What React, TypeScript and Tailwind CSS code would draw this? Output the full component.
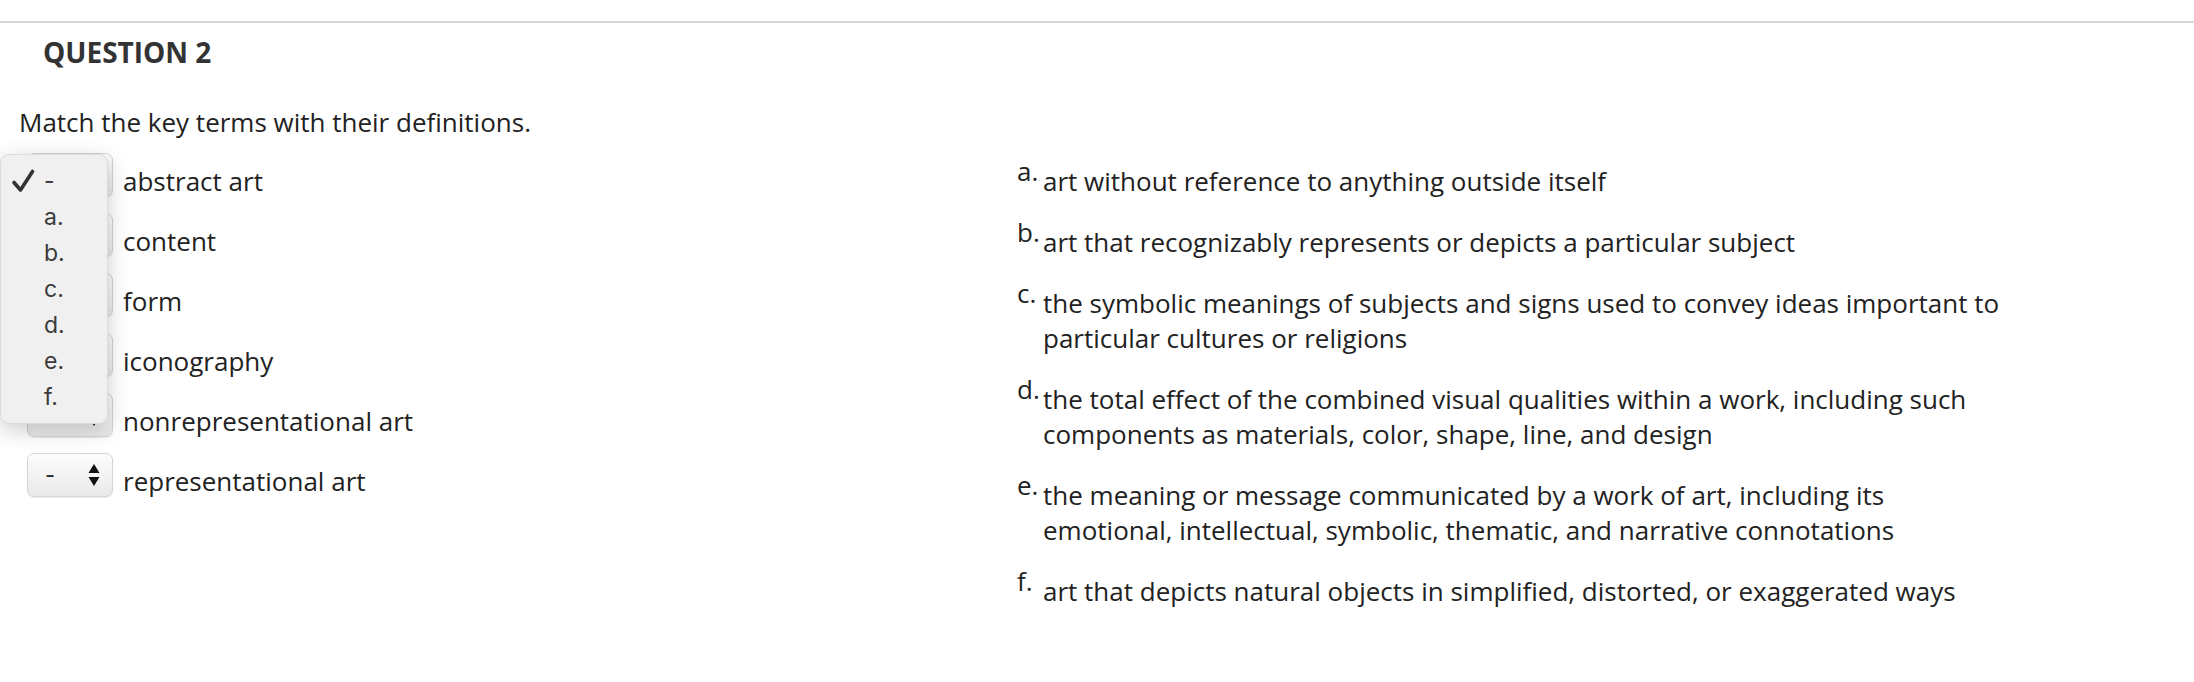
import React from 'react';

const terms = [
  'abstract art',
  'content',
  'form',
  'iconography',
  'nonrepresentational art',
  'representational art',
];

const definitions = [
  { key: 'a.', text: 'art without reference to anything outside itself' },
  { key: 'b.', text: 'art that recognizably represents or depicts a particular subject' },
  {
    key: 'c.',
    text: 'the symbolic meanings of subjects and signs used to convey ideas important to particular cultures or religions',
  },
  {
    key: 'd.',
    text: 'the total effect of the combined visual qualities within a work, including such components as materials, color, shape, line, and design',
  },
  {
    key: 'e.',
    text: 'the meaning or message communicated by a work of art, including its emotional, intellectual, symbolic, thematic, and narrative connotations',
  },
  { key: 'f.', text: 'art that depicts natural objects in simplified, distorted, or exaggerated ways' },
];

const options = ['a.', 'b.', 'c.', 'd.', 'e.', 'f.'];

function Arrows() {
  return (
    <svg width="12" height="24" viewBox="0 0 12 24" className="fill-[#111]">
      <path d="M6 1 L11.5 10 L0.5 10 Z" />
      <path d="M0.5 14 L11.5 14 L6 23 Z" />
    </svg>
  );
}

// covered: the open menu sits over this box, so its label is hidden behind it
function SelectBox({ covered }: { covered: boolean }) {
  return (
    <div className="ml-[8px] -mt-[11px] flex h-[44px] w-[86px] shrink-0 items-center justify-between rounded-[7px] border border-[#d4d4d4] bg-gradient-to-b from-[#fdfdfd] to-[#e9e9e9] pl-[17px] pr-[12px] shadow-[0_1px_1px_rgba(0,0,0,0.08)]">
      <span className={`font-['Inter',sans-serif] text-[22px] leading-none text-[#222] ${covered ? 'invisible' : ''}`}>-</span>
      <Arrows />
    </div>
  );
}

function OpenMenu() {
  return (
    <div className="absolute left-0 top-[154px] w-[108px] rounded-[9px] border border-[#dcdcdc] bg-[#f0f0f0] py-[8px] font-['Inter',sans-serif] text-[23px] text-[#3a3a3a] shadow-[0_6px_22px_rgba(0,0,0,0.2)]">
      <div className="flex h-[36px] items-center">
        <svg width="24" height="24" viewBox="0 0 24 24" className="ml-[10px] mr-[9px] shrink-0">
          <path
            d="M3 13.5 L9.5 21 L21.5 2.5"
            fill="none"
            stroke="#333"
            strokeWidth="3.6"
            strokeLinecap="round"
            strokeLinejoin="round"
          />
        </svg>
        <span className="leading-none">-</span>
      </div>
      {options.map((o) => (
        <div key={o} className="flex h-[36px] items-center pl-[43px] leading-none">
          {o}
        </div>
      ))}
    </div>
  );
}

export default function App() {
  return (
    <div className="relative h-[682px] w-[2194px] overflow-hidden bg-white font-['Open_Sans',sans-serif] text-[#222]">
      <div className="pt-[21px]">
        <div className="h-[2px] bg-[#d6d6d6]" />
      </div>

      <h2 className="ml-[43px] mt-[10px] text-[28px] font-bold leading-[38px] text-[#333]">QUESTION 2</h2>

      <p className="ml-[19px] mt-[34px] text-[26px] leading-[35px]">Match the key terms with their definitions.</p>

      <div className="mt-[24px] flex">
        {/* terms with their dropdowns */}
        <ul className="ml-[19px] flex w-[998px] shrink-0 flex-col gap-[25px]">
          {terms.map((t, i) => (
            <li key={t} className="flex h-[35px] items-start">
              <SelectBox covered={i < 5} />
              <span className="ml-[10px] text-[26px] leading-[35px]">{t}</span>
            </li>
          ))}
        </ul>

        {/* definitions */}
        <ol className="flex flex-col gap-[26px]">
          {definitions.map((d) => (
            <li key={d.key} className="flex items-start text-[26px]">
              <span className="w-[26px] shrink-0 leading-[15px]">{d.key}</span>
              <span className="w-[965px] leading-[35px]">{d.text}</span>
            </li>
          ))}
        </ol>
      </div>

      <OpenMenu />
    </div>
  );
}
